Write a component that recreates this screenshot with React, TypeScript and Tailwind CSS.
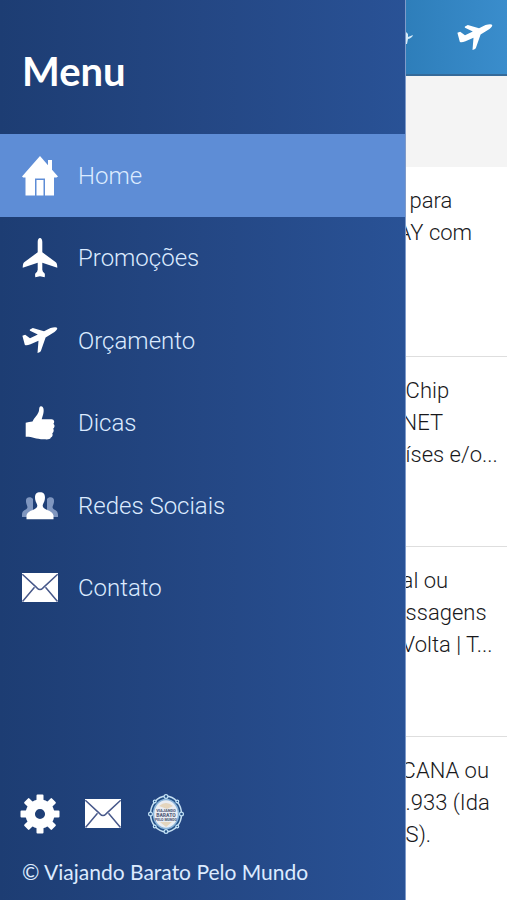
import type { ReactNode } from "react";

const icon = "size-10 shrink-0";

function HomeIcon() {
  return (
    <svg className={icon} viewBox="0 0 40 40" fill="#fff" aria-hidden="true">
      <path d="M20 0 2 20.500 3.200 21.500H5.500V39.500H15V22.500H25V39.500H34V21.500H36.500L38 20.500 32 13.700V4H28V9.200Z" />
      <path d="M16.500 24h7v15.500h-7z" />
    </svg>
  );
}

function PlaneIcon() {
  return (
    <svg className={icon} viewBox="0 0 40 40" fill="#fff" aria-hidden="true">
      <path d="M20 0c-1.500 0-2.300 1.800-2.300 4v10.300L4.200 24.200Q2.700 25.500 2.700 29.800L17.700 24.800V31.800Q17.500 34 15.500 35.300 14.800 36.200 15.300 39.200L20 38.200 24.700 39.200Q25.200 36.200 24.500 35.300 22.500 34 22.300 31.800V24.800L37.300 29.800Q37.300 25.500 35.800 24.200L22.300 14.300V4c0-2.200-.8-4-2.300-4Z" />
    </svg>
  );
}

function TakeoffIcon() {
  return (
    <svg className={icon} viewBox="0 0 40 40" fill="#fff" aria-hidden="true">
      <path d="M2.400 14.700 5.200 13.800 10 17.200 17.800 13.600 10 9.700Q9.400 9.200 10 8.600L12.800 6.900 24 10.200 30.500 7Q36.500 5.700 37.200 7.100 37.600 8.500 34.500 11L25.600 16.500 20.800 30.200Q20 31.500 17.500 31.900L18.500 19.800 10.500 23.200Q6 25.200 4.800 23.700Z" />
    </svg>
  );
}

function ThumbIcon() {
  return (
    <svg className={icon} viewBox="0 0 40 40" fill="#fff" aria-hidden="true">
      <path d="M5.700 19.800Q9 18.700 12.500 18.500C14.500 14 18.300 11.600 19 7.400 19.300 4.600 19.500 3.200 21 3.200 24.300 3.600 24.300 8.500 22.500 13.500L21.700 16.200H31.500C34.500 16.300 34.800 19.500 33.400 20.700 35.300 22.300 34.500 24.700 33.200 25.500 34.300 27.600 33.500 29.400 32.300 30.200 33.200 32.200 32.200 34 30.800 34.500 30.500 36.600 27 36.600 24 36.300 15 36 13 33.600 5.700 33.700Z" />
    </svg>
  );
}

function PeopleIcon() {
  return (
    <svg className={icon} viewBox="0 0 40 40" aria-hidden="true">
      <g fill="#7f96bf">
        <path d="M9.500 11.200c-3 0-3.900 2-3.400 5.200.4 2.600 1.500 3.200 1.300 5.200-.3 2.700-5.400 1.500-5.400 7.400v2h11V13c-.8-1.300-2-1.800-3.500-1.800Z" />
        <path d="M30.500 11.200c3 0 3.900 2 3.400 5.200-.4 2.600-1.500 3.200-1.300 5.200.3 2.700 5.400 1.500 5.400 7.400v2H27V13c.8-1.300 2-1.800 3.500-1.800Z" />
      </g>
      <path fill="#fff" d="M20 6.300c-4.200 0-5.500 2.700-4.800 7.100.5 3 2.300 4.500 2.100 6.700-.2 4.200-9.900 3.600-10.800 9.500v3.600h27v-3.600c-.9-5.900-10.600-5.300-10.800-9.500-.2-2.200 1.600-3.700 2.100-6.700.7-4.400-.6-7.100-4.800-7.100Z" />
    </svg>
  );
}

function MailIcon() {
  return (
    <svg className={icon} viewBox="0 0 40 40" aria-hidden="true">
      <path fill="#fff" d="M2 5h36v29H2z" />
      <path fill="none" stroke="#47588a" strokeWidth="1.500" d="m2.300 6.200 14.700 13.700q3 3.200 6 0L37.700 6.200M2.500 33.400l12-14.200M37.500 33.400 25.500 19.200" />
    </svg>
  );
}

function GearIcon() {
  const teeth = [0, 45, 90, 135, 180, 225, 270, 315];
  return (
    <svg className={icon} viewBox="0 0 40 40" fill="#fff" aria-hidden="true">
      {teeth.map((angle) => (
        <path key={angle} d="M14 10 16.500 7V1.500Q16.500 .5 17.500 .5H22.500Q23.500 .5 23.500 1.500V7L26 10Z" transform={`rotate(${angle} 20 20)`} />
      ))}
      <circle cx="20" cy="20" r="9.800" fill="none" stroke="#fff" strokeWidth="9.500" />
    </svg>
  );
}

function BrandIcon() {
  return (
    <svg className={icon} viewBox="0 0 40 40" aria-hidden="true">
      <ellipse cx="20" cy="20" rx="15.500" ry="17.800" fill="#235087" stroke="#c4def2" strokeWidth="1.500" />
      <ellipse cx="20" cy="20" rx="12.500" ry="14.500" fill="#e9edf3" stroke="#8bb5da" strokeWidth="1.500" />
      <path d="M13 12q7-6 14 0l-6 3zM14 28h12l-6 5z" fill="#e4d5bd" />
      <g fill="#235087" stroke="#c4e3f7" strokeWidth="1.200">
        <circle cx="20" cy="2.500" r="1.900" />
        <circle cx="20" cy="37.500" r="1.900" />
        <circle cx="4.500" cy="20" r="1.900" />
        <circle cx="35.500" cy="20" r="1.900" />
        <circle cx="8.700" cy="7.500" r="1.400" />
        <circle cx="31.300" cy="7.500" r="1.400" />
        <circle cx="8.700" cy="32.500" r="1.400" />
        <circle cx="31.300" cy="32.500" r="1.400" />
      </g>
      <g fill="#59647f" fontFamily="Roboto, sans-serif" fontWeight="900" textAnchor="middle">
        <text x="20" y="17.500" fontSize="4">VIAJANDO</text>
        <text x="20" y="22.500" fontSize="5">BARATO</text>
        <text x="20" y="26.500" fontSize="3.500">PELO MUNDO</text>
      </g>
    </svg>
  );
}

const links: { label: string; icon: ReactNode }[] = [
  { label: "Home", icon: <HomeIcon /> },
  { label: "Promoções", icon: <PlaneIcon /> },
  { label: "Orçamento", icon: <TakeoffIcon /> },
  { label: "Dicas", icon: <ThumbIcon /> },
  { label: "Redes Sociais", icon: <PeopleIcon /> },
  { label: "Contato", icon: <MailIcon /> },
];

const posts: { text: string; start: string }[][] = [
  [
    { text: "para", start: "ml-1" },
    { text: "AY com", start: "-ml-2" },
  ],
  [
    { text: "Chip", start: "ml-0" },
    { text: "NET", start: "-ml-1" },
    { text: "íses e/o...", start: "ml-0" },
  ],
  [
    { text: "al ou", start: "-ml-1" },
    { text: "ssagens", start: "ml-0" },
    { text: "Volta | T...", start: "-ml-1" },
  ],
  [
    { text: "CANA ou", start: "-ml-1" },
    { text: ".933 (Ida", start: "ml-0" },
    { text: "S).", start: "ml-0" },
  ],
];

export default function App() {
  return (
    <div className="flex min-h-screen bg-white font-[Roboto,sans-serif]">
      <aside className="flex w-4/5 shrink-0 flex-col border-r border-[#7f9bca] bg-linear-to-r from-[#1d3d73] via-[#244784] to-[#295296] text-[#dcebff]">
        <h2 className="flex h-[134px] items-center pt-2 pl-[22px] font-[Lato,sans-serif] text-[40px] font-bold text-white">
          Menu
        </h2>
        <nav>
          {links.map((link, index) => (
            <a
              key={link.label}
              href="#"
              aria-current={index === 0 ? "page" : undefined}
              className="flex h-[82px] items-center gap-[18px] pl-5 text-2xl font-light odd:h-[83px] aria-[current=page]:bg-[#5e8dd6]"
            >
              {link.icon}
              {link.label}
            </a>
          ))}
        </nav>
        <footer className="mt-auto pb-3 pl-5">
          <div className="flex gap-[23px]">
            <button type="button" aria-label="Configurações"><GearIcon /></button>
            <button type="button" aria-label="E-mail"><MailIcon /></button>
            <button type="button" aria-label="Viajando Barato"><BrandIcon /></button>
          </div>
          <p className="mt-[22px] pl-0.5 font-[Lato,sans-serif] text-[21px] leading-8">© Viajando Barato Pelo Mundo</p>
        </footer>
      </aside>

      <main className="min-w-0 flex-1 overflow-hidden">
        <header className="flex h-[76px] items-center justify-between border-b-2 border-[#356a99] bg-linear-to-r from-[#2e7eba] to-[#3a8dcc] pt-0.5 pr-3">
          <svg className="h-4 w-2" viewBox="0 0 8 16" fill="#d5eaf8" aria-hidden="true">
            <path d="M0 2 2 4V7L7 5Q6 8 2 9L1 14H0Z" />
          </svg>
          <button type="button" aria-label="Orçamento"><TakeoffIcon /></button>
        </header>
        <div className="h-[91px] bg-[#f4f4f4]" />
        {posts.map((lines, index) => (
          <article
            key={index}
            className="h-[190px] border-b border-[#dedede] pt-[18px] text-[22px] leading-8 font-light whitespace-nowrap text-[#18181b] last:h-auto last:border-0"
          >
            {lines.map((line) => (
              <p key={line.text} className={line.start}>{line.text}</p>
            ))}
          </article>
        ))}
      </main>
    </div>
  );
}
